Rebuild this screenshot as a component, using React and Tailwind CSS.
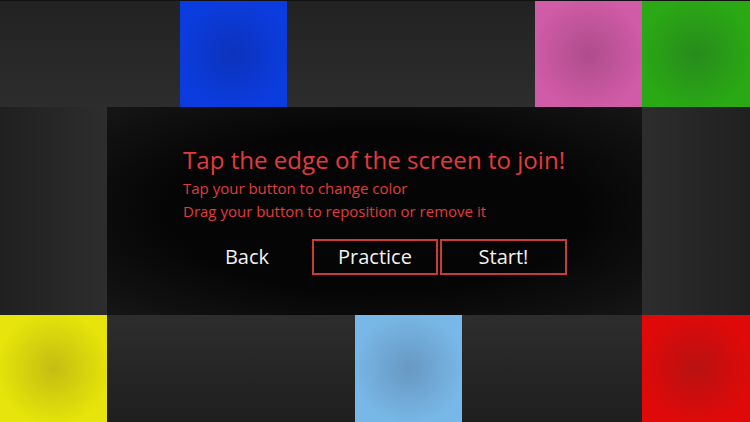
const font = { fontFamily: '"Open Sans", "Noto Sans", sans-serif' };

const Tile = ({ className = '' }) => (
  <div className={`h-full shrink-0 ${className}`}></div>
);

export default function App() {
  return (
    <div className="w-[750px] h-[422px] overflow-hidden bg-[#2b2b2b] flex flex-col" style={font}>
      {/* top row */}
      <div className="h-[107px] flex border-t border-[#111] bg-gradient-to-b from-[#222] to-[#2d2d2d]">
        <Tile className="w-[180px]" />
        <Tile className="w-[107px] bg-[radial-gradient(circle,#0c33bc_0%,#0b3cdf_75%)]" />
        <Tile className="w-[248px]" />
        <Tile className="w-[107px] bg-[radial-gradient(circle,#ae4d8c_0%,#d05ba6_75%)]" />
        <Tile className="flex-1 bg-[radial-gradient(circle,#278b1c_0%,#2aa914_75%)]" />
      </div>

      {/* middle row */}
      <div className="h-[208px] flex">
        <Tile className="w-[107px] bg-gradient-to-r from-[#202020] to-[#2d2d2d]" />
        <div className="w-[535px] h-full bg-[radial-gradient(ellipse_at_center,#050505_55%,#161616_100%)] pl-[76px] pt-[38px] flex flex-col">
          <h1 className="text-[24.1px] leading-[30px] text-[#e23b3b]">
            Tap the edge of the screen to join!
          </h1>
          <p className="text-[15px] leading-[23px] mt-[2px] text-[#e23b3b]">Tap your button to change color</p>
          <p className="text-[15px] leading-[23px] text-[#e23b3b]">Drag your button to reposition or remove it</p>
          <div className="flex gap-[2px] mt-[16px] ml-px">
            <button className="w-[126px] h-[36px] text-[20px] text-[#f2f2f2] border-2 border-transparent">
              Back
            </button>
            <button className="w-[126px] h-[36px] text-[20px] text-[#f2f2f2] border-2 border-[#c93a3a]">
              Practice
            </button>
            <button className="w-[127px] h-[36px] text-[20px] text-[#f2f2f2] border-2 border-[#c93a3a]">
              Start!
            </button>
          </div>
        </div>
        <Tile className="flex-1 bg-gradient-to-l from-[#202020] to-[#2d2d2d]" />
      </div>

      {/* bottom row */}
      <div className="flex-1 flex bg-gradient-to-t from-[#1f1f1f] to-[#2d2d2d]">
        <Tile className="w-[107px] bg-[radial-gradient(circle,#c5bd12_0%,#e6e40a_75%)]" />
        <Tile className="w-[248px]" />
        <Tile className="w-[107px] bg-[radial-gradient(circle,#6898c2_0%,#78b8e8_75%)]" />
        <Tile className="w-[180px]" />
        <Tile className="flex-1 bg-[radial-gradient(circle,#b91111_0%,#e00909_75%)]" />
      </div>
    </div>
  );
}
